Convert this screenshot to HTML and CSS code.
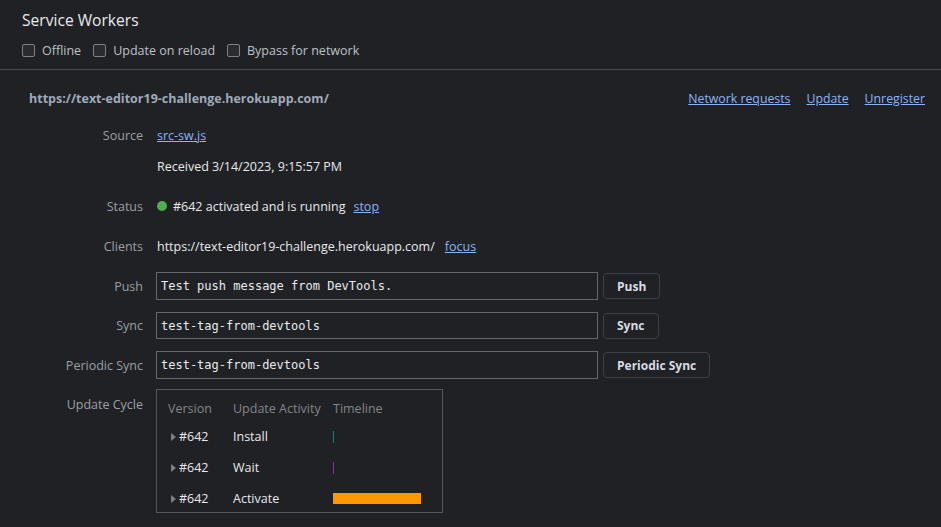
FILE: index.html
```html
<!DOCTYPE html>
<html lang="en">
<head>
<meta charset="utf-8">
<title>Service Workers</title>
<link rel="stylesheet" href="styles.css">
</head>
<body>
<header class="top">
  <h1 class="title">Service Workers</h1>
  <div class="toolbar">
    <label class="check"><span class="box"></span>Offline</label>
    <label class="check"><span class="box"></span>Update on reload</label>
    <label class="check"><span class="box"></span>Bypass for network</label>
  </div>
</header>
<section class="sw">
  <div class="sw-head">
    <span class="origin">https://text-editor19-challenge.herokuapp.com/</span>
    <nav class="actions">
      <a class="link" href="#">Network requests</a>
      <a class="link" href="#">Update</a>
      <a class="link" href="#">Unregister</a>
    </nav>
  </div>
  <div class="fields">
    <div class="row top-align">
      <div class="label line">Source</div>
      <div class="value stack">
        <div class="line"><a class="link" href="#">src-sw.js</a></div>
        <div class="line">Received 3/14/2023, 9:15:57 PM</div>
      </div>
    </div>
    <div class="row">
      <div class="label">Status</div>
      <div class="value"><span class="dot"></span>#642 activated and is running<a class="link gap" href="#">stop</a></div>
    </div>
    <div class="row">
      <div class="label">Clients</div>
      <div class="value">https://text-editor19-challenge.herokuapp.com/<a class="link gap wide" href="#">focus</a></div>
    </div>
    <div class="row">
      <div class="label">Push</div>
      <div class="value"><div class="input">Test push message from DevTools.</div><button class="btn">Push</button></div>
    </div>
    <div class="row row-sync">
      <div class="label">Sync</div>
      <div class="value"><div class="input">test-tag-from-devtools</div><button class="btn">Sync</button></div>
    </div>
    <div class="row row-periodic">
      <div class="label">Periodic Sync</div>
      <div class="value"><div class="input">test-tag-from-devtools</div><button class="btn">Periodic Sync</button></div>
    </div>
    <div class="row top-align">
      <div class="label cycle-label">Update Cycle</div>
      <div class="value">
        <div class="cycle">
          <div class="crow head"><span class="c1">Version</span><span class="c2">Update Activity</span><span class="c3">Timeline</span></div>
          <div class="crow"><span class="c1"><span class="tri"></span>#642</span><span class="c2">Install</span><span class="c3"><span class="mark install"></span></span></div>
          <div class="crow"><span class="c1"><span class="tri"></span>#642</span><span class="c2">Wait</span><span class="c3"><span class="mark wait"></span></span></div>
          <div class="crow"><span class="c1"><span class="tri"></span>#642</span><span class="c2">Activate</span><span class="c3"><span class="mark activate"></span></span></div>
        </div>
      </div>
    </div>
  </div>
</section>
</body>
</html>
```
FILE: styles.css
```css
* { box-sizing: border-box; }
html, body { margin: 0; padding: 0; }
body {
  background: #202124;
  color: #e8eaed;
  font-family: "Open Sans", "Noto Sans", sans-serif;
  font-size: 12.5px;
  width: 941px;
  height: 527px;
  overflow: hidden;
}
.top {
  padding: 10px 22px 9px;
  border-bottom: 1px solid #4a4c50;
}
.title {
  margin: 0 0 10px;
  font-size: 15.6px;
  font-weight: 400;
  line-height: 20px;
  color: #e8eaed;
}
.toolbar {
  display: flex;
  align-items: center;
  height: 20px;
  gap: 12px;
  color: #bdc1c6;
}
.check {
  display: flex;
  align-items: center;
  gap: 7px;
}
.box {
  width: 13px;
  height: 13px;
  border: 1px solid #7d8185;
  border-radius: 2px;
  background: #2a2b2e;
}
.sw {
  padding: 18px 16px 0 29px;
}
.sw-head {
  display: flex;
  justify-content: space-between;
  align-items: center;
  height: 20px;
  margin-bottom: 13px;
}
.origin {
  font-weight: 700;
  color: #9eabb9;
}
.actions {
  display: flex;
  gap: 16px;
  font-size: 12.3px;
}
.link {
  color: #8ab4f8;
  text-decoration: underline;
}
.fields {
  display: flex;
  flex-direction: column;
}
.row {
  display: flex;
  align-items: center;
  margin-bottom: 12px;
  min-height: 28px;
}
.row.top-align { align-items: flex-start; }
.label {
  width: 114px;
  text-align: right;
  color: #9aa0a6;
  margin-right: 13px;
  flex: none;
}
.label.line { justify-content: flex-end; }
.cycle-label { padding-top: 6px; }
.value {
  display: flex;
  align-items: center;
  min-height: 28px;
}
.value.stack {
  flex-direction: column;
  align-items: flex-start;
  gap: 3px;
  padding-left: 1px;
}
.line {
  height: 28px;
  display: flex;
  align-items: center;
}
.row:nth-child(2) .value,
.row:nth-child(3) .value { padding-left: 1px; }
.gap { margin-left: 8px; }
.gap.wide { margin-left: 10px; }
.dot {
  width: 10px;
  height: 10px;
  border-radius: 50%;
  background: #4caf50;
  margin-right: 6px;
}
.input {
  width: 442px;
  height: 28px;
  border: 1px solid #64676b;
  padding: 0 4px;
  display: flex;
  align-items: center;
  font-family: "DejaVu Sans Mono", "Liberation Mono", monospace;
  font-size: 12px;
  color: #e8eaed;
}
.row-sync, .row-sync .value { min-height: 27px; }
.row-sync .input { height: 27px; }
.row-periodic { margin-bottom: 11px; }
.btn {
  margin-left: 5px;
  height: 26px;
  padding: 0 13px;
  background: #202124;
  border: 1px solid #3c3f43;
  border-radius: 4px;
  color: #d7dce3;
  font-family: "Open Sans", "Noto Sans", sans-serif;
  font-size: 12px;
  font-weight: 700;
}
.cycle {
  width: 287px;
  height: 124px;
  border: 1px solid #55585c;
  padding: 6px 0 0 11px;
  margin-top: -1px;
}
.crow {
  display: flex;
  align-items: center;
  height: 31px;
}
.crow.head { height: 25px; color: #80868b; }
.c1 { width: 65px; display: flex; align-items: center; }
.c2 { width: 100px; }
.c3 { display: flex; align-items: center; }
.tri {
  width: 0;
  height: 0;
  border-top: 4px solid transparent;
  border-bottom: 4px solid transparent;
  border-left: 5px solid #7b7f84;
  margin: 0 3px 0 3px;
}
.mark { display: block; }
.install { width: 1px; height: 12px; background: #00897b; }
.wait { width: 1px; height: 12px; background: #8e24aa; }
.activate { width: 88px; height: 11px; background: #ff9800; }
```
